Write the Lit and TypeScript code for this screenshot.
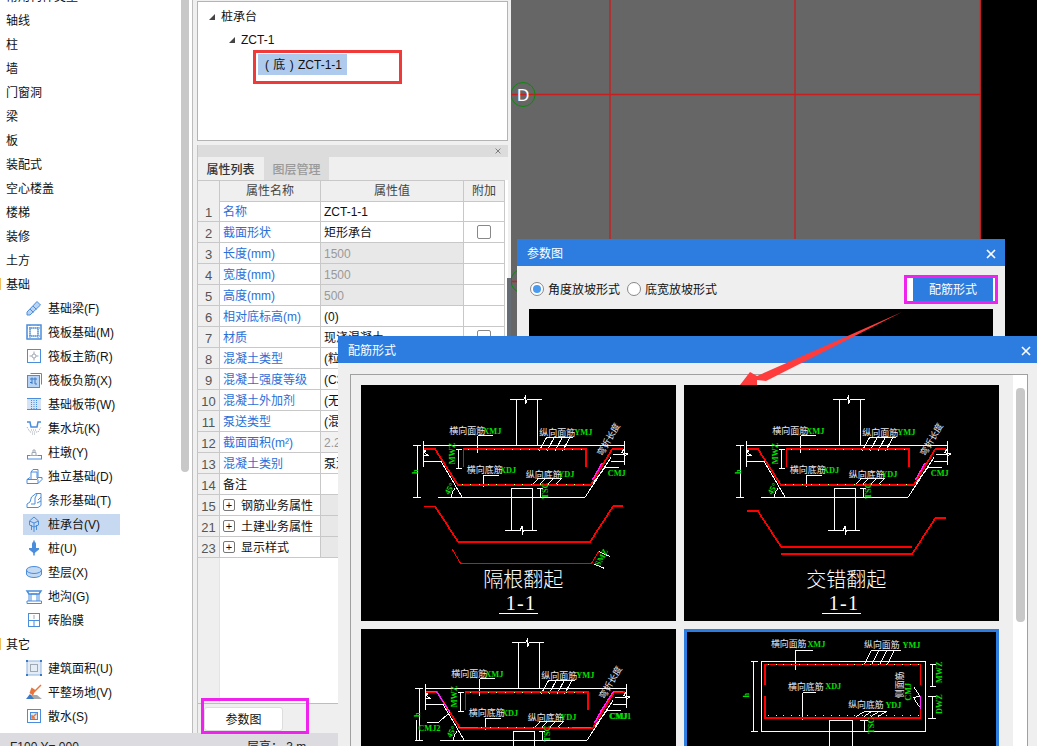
import { LitElement, html, css, svg } from "lit";
import { customElement } from "lit/decorators.js";

const pl = (pts: string, cls = "w") => svg`<polyline class=${cls} points=${pts}></polyline>`;
const lbl = (x: number, y: number, s: string, rot = 0) =>
  svg`<text class="lbl" x=${x} y=${y} transform=${rot ? `rotate(${rot} ${x} ${y})` : ""}>${s}</text>`;
const grn = (x: number, y: number, s: string, rot = 0) =>
  svg`<text class="grn" x=${x} y=${y} transform=${rot ? `rotate(${rot} ${x} ${y})` : ""}>${s}</text>`;
const dots = (x0: number, x1: number, y: number, step = 26) => {
  const out = [];
  for (let x = x0; x <= x1; x += step) out.push(svg`<rect class="dot" x=${x} y=${y} width="3" height="3"></rect>`);
  return out;
};
const hatch = (xs: number[], y0: number, y1: number, dx: number) => xs.map((x) => pl(`${x},${y0} ${x - dx},${y1}`));

const upper = (xmj: string, ydj: string) => svg`
  ${["465,58 507,58 512,46 512,71 517,58 562,58", "485,58 485,196", "547,58 547,196", "205,196 808,196", "205,183 205,260", "808,183 808,255",
    "186,196 186,352", "175,196 197,196", "175,352 197,352", "205,212 216,205 208,218 218,225 205,225", "808,205 800,218 818,222 808,228",
    "205,244 258,244 322,352", "250,352 690,352 768,232", "775,222 808,222", "768,244 808,244",
    "310,207 310,265", "302,207 320,207", "302,265 320,265",
    "368,167 413,167", "368,167 368,218", "575,172 655,172", "385,285 432,285", "385,285 385,320", "550,295 620,295",
    "470,325 533,325", "470,325 470,451", "533,325 533,451", "450,451 496,451 501,438 501,464 506,451 546,451",
    "555,325 555,352", "546,325 564,325", "750,262 792,262", "750,262 722,300", "742,272 712,312"].map((p) => pl(p))}
  ${hatch([575, 598, 622, 645], 172, 212, 22)}
  ${hatch([550, 572, 596, 620], 295, 316, 20)}
  <path class="w" d="M290,352 A34,34 0 0 1 300,326"></path>
  ${pl("207,207 240,207 308,314 708,314 772,207 805,207", "r")}
  ${pl("325,262 325,207 693,207 693,262", "r")}
  ${dots(340, 690, 206)}
  ${dots(320, 700, 311)}
  ${pl("742,248 712,300", "m")}
  ${lbl(283, 163, "横向面筋")}${grn(385, 162, xmj)}
  ${lbl(553, 167, "纵向面筋")}${grn(658, 165, "YMJ")}
  ${lbl(335, 280, "横向底筋")}${grn(435, 279, "XDJ")}
  ${lbl(512, 293, "纵向底筋")}${grn(610, 291, ydj)}
  ${grn(300, 253, "MWZ", -90)}${grn(190, 282, "h", -90)}${grn(578, 356, "TSC", -90)}
  ${grn(282, 346, "45°", -60)}${grn(758, 288, "CMJ")}
  ${lbl(742, 230, "弯折长度", -60)}
`;

const title = (s: string, x: number) => svg`
  <text class="ttl" x=${x} y="622">${s}</text>
  <text class="num" x="452" y="690">1-1</text>
  ${pl("432,700 548,700")}
`;

const thumbs = [
  svg`<svg class="draw" viewBox="18 15 945 708">
    ${upper("XMJ", "YDJ")}
    ${pl("207,379 240,379 310,486 705,486 775,378 805,378", "r")}
    ${pl("292,508 316,549 710,549 732,513", "r2")}
    ${pl("732,515 766,530")}${pl("716,552 748,565")}
    ${grn(733, 560, "SMZ", -60)}
    ${title("隔根翻起", 385)}
  </svg>`,
  svg`<svg class="draw" viewBox="12 15 945 708">
    <g transform="translate(-6 0)">${upper("XMJ", "YDJ")}</g>
    ${pl("202,392 233,392 303,500 695,500", "r")}
    ${pl("303,521 697,521 767,413 797,413", "r")}
    <g transform="translate(-6 0)">${title("交错翻起", 385)}</g>
  </svg>`,
  svg`<svg class="draw" viewBox="18 12 945 708">
    <g transform="translate(6 -6)">${upper("XMJ", "YDJ")}</g>
    ${pl("213,200 245,200 285,262", "m")}
    ${pl("310,307 368,307", "m")}${pl("650,307 708,307", "m")}
    ${pl("775,200 803,200", "m")}${pl("775,200 735,262", "m")}
    ${pl("217,292 250,292 285,262")}${pl("185,285 185,345")}
    ${grn(190, 318, "CMJ2")}${grn(762, 281, "CMJ1")}
  </svg>`,
  svg`<svg class="draw" viewBox="21 21 927 699">
    ${["241,112 740,112 740,322 241,322 241,112", "217,112 217,322", "208,112 230,112", "208,322 230,322",
      "345,76 398,76", "345,76 345,135", "575,78 665,78", "367,205 407,205", "367,205 367,288", "555,262 622,262",
      "762,120 762,188", "752,120 772,120", "752,188 772,188", "760,216 760,284", "748,216 772,216", "748,284 772,284",
      "703,187 723,216 703,220 722,250", "555,290 555,325", "541,290 564,290", "448,290 518,290", "448,290 448,740", "518,290 518,740"].map((p) => pl(p))}
    ${hatch([575, 598, 622, 645], 78, 122, 22)}
    ${hatch([555, 578, 600, 622], 262, 278, 26)}
    ${pl("252,183 252,120 725,120 725,183", "r")}
    ${pl("252,216 252,282 725,282 725,216", "r")}
    ${pl("725,216 725,255", "m")}
    ${dots(260, 720, 119, 24)}${dots(260, 720, 272, 24)}
    ${lbl(270, 67, "横向面筋")}${grn(381, 66, "XMJ")}
    ${lbl(553, 70, "纵向面筋")}${grn(670, 69, "YMJ")}
    ${lbl(322, 196, "横向底筋")}${grn(435, 195, "XDJ")}
    ${lbl(505, 253, "纵向底筋")}${grn(618, 252, "YDJ")}
    ${grn(790, 176, "MWZ", -90)}${grn(790, 270, "DWZ", -90)}
    ${grn(203, 220, "h", -90)}${grn(582, 330, "TSC", -90)}${grn(696, 230, "CMJ", -90)}
    ${lbl(670, 222, "侧面筋", -90)}
  </svg>`,
];

const icons: Record<string, unknown> = {
  beam: svg`<path class="il" d="M1 12 L11 1.5 L14.5 5 L4 15 L1 15 Z"></path><path class="ib1" d="M4 9 L7.5 12.5 M7 6 L10.5 9.5"></path>`,
  raft: svg`<rect class="ib2" x="1" y="1" width="14" height="14"></rect><rect class="ib1" x="4" y="4" width="8" height="8"></rect><path class="ib1" stroke-dasharray="1 1" d="M1 4 H15 M1 12 H15 M4 1 V15 M12 1 V15"></path>`,
  main: svg`<rect class="ib1" x="1.5" y="1.5" width="13" height="13"></rect><path class="ig" d="M3.5 8 H6 M10 8 H12.5 M8 3.5 V6 M8 10 V12.5"></path><circle class="ig" cx="8" cy="8" r="2"></circle>`,
  neg: svg`<path class="ib1" d="M4.5 1.5 H15.5 V12.5"></path><rect class="il" x="1.5" y="3.5" width="12" height="12"></rect><path class="ibd" d="M4 7 H11 M6 5.5 V12 M9 5.5 V12 M4 10.5 H6 M9 12 L11 12"></path>`,
  strip: svg`<rect class="lf" x="1" y="2" width="14" height="12"></rect><path class="ib1" stroke-dasharray="1 1" d="M5.5 2 V14 M10.5 2 V14 M8 2 V14"></path><path class="ib1" d="M1 2.5 H15 M1 13.5 H15"></path>`,
  pit: svg`<path class="ib2" d="M1 2 H4 L5 7 H11 L12 2 H15"></path><path class="ig" stroke-dasharray="1 1" d="M1 7 L4 12 H12 L15 7 M5 10 H11 M6 14 H10"></path>`,
  pier: svg`<rect class="ib1" x="1.5" y="11.5" width="14" height="3.5"></rect><path class="ig" d="M4 11.5 H12 M6 11 V8.5 H10 V11 M7 8 V6 H9 V8"></path>`,
  iso: svg`<path class="ib1" d="M1 15.5 V11.5 H5 V4 L7 1.5 H12 V10 M5 4 H11 V10 M1 11.5 L4 9.5 M1 15.5 H12 L16 11.5 V9.5 H12 L11 11.5 H1 M12 15.5 V11.5"></path>`,
  bar: svg`<path class="ib1" d="M1 15.5 V12 L4 10 L5.5 5 L10 1.5 H15 V13.5 L12 15.5 Z M5 12 H9 L9 6 L11 2 M12 8 L15 5 M11 11 L15 9"></path>`,
  cap: svg`<path class="ib1" d="M8 1 L12.5 5 L12.5 9 L8 11 L3.5 9 V5 Z M3.5 5 L8 7 L12.5 5 M8 7 V16 M5.5 9 V14 M10.5 9 V14"></path>`,
  pile: svg`<path class="ib" d="M8 0.5 V15.5" stroke-width="1.5"></path><rect class="lfb" x="6" y="2" width="4" height="7" rx="1.5"></rect><path class="lfs" d="M3 8 H13 V9.5 L8 13.5 L3 9.5 Z"></path>`,
  pad: svg`<path class="lf2" d="M0.5 6 A7.5 3.5 0 0 1 15.5 6 V10 A7.5 3.5 0 0 1 0.5 10 Z"></path><path class="ib1" d="M0.5 6 A7.5 3.5 0 0 0 15.5 6"></path>`,
  ditch: svg`<path class="ib1" d="M1 15.5 H15.5 V13 H1 Z M3 13 V6 M13 13 V6 M5 13 V6 M11 13 V6 M5 6 H11"></path><path class="ib2" d="M1 3 H15 L13 6 H3 Z"></path>`,
  brick: svg`<rect class="ib1" x="2.5" y="1.5" width="11" height="13"></rect><path class="ib1" d="M2.5 8.5 H13.5 M8 8.5 V14.5"></path><path class="ig" d="M8 3 V7"></path>`,
  area: svg`<rect class="lfbl" x="1" y="1" width="14" height="14"></rect><rect class="ig" x="4.5" y="4.5" width="7" height="7"></rect><path class="cor" d="M0 0 H2 V2 H0 Z M14 0 H16 V2 H14 Z M0 14 H2 V16 H0 Z M14 14 H16 V16 H14 Z"></path>`,
  level: svg`<path class="orl" d="M15 1 L8 8"></path><path class="orf" d="M9.5 6 L5.5 3.5 L3.5 9 L7 11.5 Z"></path><path class="gr" d="M5 11 L11 11 L16 15 L4 15 Z"></path><path class="bl" d="M0 15 L4 10 L8 15 Z"></path>`,
  water: svg`<rect class="ib1" x="1.5" y="1.5" width="13" height="13"></rect><rect class="lfs2" x="4.5" y="4.5" width="7" height="7"></rect><path class="orl" d="M10.5 5.5 L6 10 M6 7 V10 H9"></path>`,
};

const sideItems: Array<{ t: string; k?: "g" | "m"; i?: string; sel?: boolean }> = [
  { t: "常用构件类型" }, { t: "轴线" }, { t: "柱" }, { t: "墙" }, { t: "门窗洞" }, { t: "梁" }, { t: "板" }, { t: "装配式" },
  { t: "空心楼盖" }, { t: "楼梯" }, { t: "装修" }, { t: "土方" }, { t: "基础", k: "m" },
  { t: "基础梁(F)", k: "g", i: "beam" }, { t: "筏板基础(M)", k: "g", i: "raft" }, { t: "筏板主筋(R)", k: "g", i: "main" },
  { t: "筏板负筋(X)", k: "g", i: "neg" }, { t: "基础板带(W)", k: "g", i: "strip" }, { t: "集水坑(K)", k: "g", i: "pit" },
  { t: "柱墩(Y)", k: "g", i: "pier" }, { t: "独立基础(D)", k: "g", i: "iso" }, { t: "条形基础(T)", k: "g", i: "bar" },
  { t: "桩承台(V)", k: "g", i: "cap", sel: true }, { t: "桩(U)", k: "g", i: "pile" }, { t: "垫层(X)", k: "g", i: "pad" },
  { t: "地沟(G)", k: "g", i: "ditch" }, { t: "砖胎膜", k: "g", i: "brick" }, { t: "其它", k: "m" },
  { t: "建筑面积(U)", k: "g", i: "area" }, { t: "平整场地(V)", k: "g", i: "level" }, { t: "散水(S)", k: "g", i: "water" },
];

const rows: Array<{ n: string; name: string; val?: string; v?: "dis" | "mut"; cb?: boolean; plain?: boolean; exp?: boolean }> = [
  { n: "1", name: "名称", val: "ZCT-1-1" },
  { n: "2", name: "截面形状", val: "矩形承台", cb: true },
  { n: "3", name: "长度(mm)", val: "1500", v: "dis" },
  { n: "4", name: "宽度(mm)", val: "1500", v: "dis" },
  { n: "5", name: "高度(mm)", val: "500", v: "dis" },
  { n: "6", name: "相对底标高(m)", val: "(0)" },
  { n: "7", name: "材质", val: "现浇混凝土", cb: true },
  { n: "8", name: "混凝土类型", val: "(粒径31.5砼32.5级)" },
  { n: "9", name: "混凝土强度等级", val: "(C30)" },
  { n: "10", name: "混凝土外加剂", val: "(无)" },
  { n: "11", name: "泵送类型", val: "(混凝土泵)" },
  { n: "12", name: "截面面积(m²)", val: "2.25", v: "mut" },
  { n: "13", name: "混凝土类别", val: "泵送砼" },
  { n: "14", name: "备注", val: "", plain: true },
  { n: "15", name: "钢筋业务属性", exp: true },
  { n: "21", name: "土建业务属性", exp: true },
  { n: "23", name: "显示样式", exp: true },
];

const closeX = html`<svg class="x" viewBox="0 0 10 10"><path d="M1 1 L9 9 M9 1 L1 9"></path></svg>`;

@customElement("app-root")
export class AppRoot extends LitElement {
  static styles = css`
    :host { display: block; position: relative; width: 1037px; height: 746px; overflow: hidden; background: #f0f0f0;
      font: 12px/1 "Liberation Sans", "Noto Sans CJK SC", sans-serif; color: #111; }
    .main { display: flex; height: 733px; }
    .side { width: 192px; height: 733px; box-sizing: content-box; background: #fff; border-right: 1px solid #bdbdbd; display: flex; overflow: hidden; flex: none; }
    .list { flex: 1; margin-top: -16px; }
    .list span { padding-top: 1px; }
    .sb { width: 8px; height: 472px; margin: 0 3px 0 0; background: #c8c8c8; border-radius: 0 0 4px 4px; flex: none; }
    .it { height: 24px; display: flex; align-items: center; padding-left: 6px; }
    .it.m { padding-left: 0; }
    .mark { width: 1px; height: 12px; background: #f0c060; margin-right: 5px; }
    .it.g { padding-left: 23px; }
    .pill { display: flex; align-items: center; gap: 6px; width: 94px; height: 21px; padding-left: 3px; flex: none; }
    .pill.sel { background: #c6d9f0; }
    .ic { width: 16px; height: 16px; flex: none; overflow: visible; }
    .ib, .ib1, .ib2, .ibd, .ig, .orl { fill: none; }
    .ib, .ib1, .ib2 { stroke: #4a8ddc; }
    .ib1 { stroke-width: 1; }
    .ib2 { stroke-width: 1.5; }
    .ibd { stroke: #3a78c8; }
    .ig { stroke: #a0a8b4; }
    .il { fill: #b9d3f2; stroke: #4a8ddc; }
    .lf { fill: #d4e3f6; }
    .lfb { fill: #4a8ddc; }
    .lfs { fill: #4a8ddc; }
    .lf2 { fill: #c4d9f2; stroke: #4a8ddc; }
    .lfbl { fill: #e4ecf6; stroke: #8fb4e4; }
    .lfs2 { fill: #dbe8f8; stroke: #4a8ddc; }
    .cor { fill: #3a78c8; }
    .orl { stroke: #e8743b; stroke-width: 1.4; }
    .orf { fill: #e8743b; }
    .gr { fill: #a8a8a8; }
    .bl { fill: #3a78c8; }

    .col { width: 311px; margin-left: 4px; flex: none; display: flex; flex-direction: column; gap: 4px; padding-top: 1px; box-sizing: border-box; height: 733px; }
    .tree { position: relative; height: 140px; box-sizing: border-box; background: #fff; border: 1px solid #b4b4b4; flex: none; padding-top: 3px; }
    .node { height: 24px; display: flex; align-items: center; gap: 6px; }
    .tri { width: 0; height: 0; border-style: solid; border-width: 0 0 6px 6px; border-color: transparent transparent #444 transparent; }
    .n1 { padding-left: 11px; }
    .n2 { padding-left: 31px; margin-top: -1px; }
    .n3 { margin-left: 60px; margin-top: 2px; width: 89px; height: 21px; background: #aecbee; padding: 1px 0 0 7px; box-sizing: border-box; white-space: pre; word-spacing: 1px; }
    .redbox { position: absolute; left: 55px; top: 48px; width: 149px; height: 34px; box-sizing: border-box; border: 3px solid #f03a3a; }

    .props { flex: 1; display: flex; flex-direction: column; border-left: 1px solid #c4c4c4; background: #fff; position: relative; min-height: 0; }
    .strip { height: 12px; background: #dcdcdc; display: flex; justify-content: flex-end; align-items: center; padding-right: 7px; flex: none; }
    .strip .x { width: 6px; height: 6px; }
    .strip .x path { stroke: #777; stroke-width: 1.6; }
    .tabs { height: 23px; display: flex; background: #efefef; flex: none; }
    .tab { width: 65px; display: flex; align-items: center; justify-content: center; font-weight: 500; color: #333; padding-top: 2px; box-sizing: border-box; }
    .tab.off { background: #dcdcdc; color: #999; margin-left: 1px; }
    .hdr, .row { display: grid; grid-template-columns: 22px 101px 143px 41px; width: 307px; }
    .hdr { height: 21px; flex: none; }
    .hdr > div { background: #efefef; border: solid #c8c8c8; border-width: 1px 1px 1px 0; display: flex; align-items: center; justify-content: center; color: #444; box-sizing: border-box; margin-bottom: -1px; }
    .row { height: 21px; flex: none; }
    .row > div { border: solid #c8c8c8; border-width: 0 1px 1px 0; display: flex; align-items: center; box-sizing: border-box; padding: 2px 0 0 3px; overflow: hidden; white-space: nowrap; }
    .row > .no { background: #efefef; justify-content: center; padding: 2px 0 0; color: #555; font-size: 13px; }
    .nm { color: #2a6fd8; }
    .nm.plain { color: #111; }
    .val.dis { background: #e8e8e8; color: #999; }
    .val.mut { background: #f2f2f2; color: #999; }
    .val.shade { background: #e8e8e8; }
    .row > .add { justify-content: center; padding: 0; }
    .cbx { width: 14px; height: 14px; box-sizing: border-box; border: 1px solid #888; border-radius: 2px; background: #fff; }
    .plus { width: 12px; height: 12px; box-sizing: border-box; border: 1px solid #777; border-radius: 2px; display: flex; align-items: center; justify-content: center; margin: -2px 6px 0 0; font-size: 11px; font-style: normal; flex: none; }
    .filler { flex: 1; min-height: 0; display: flex; }
    .filler .rail { width: 21px; background: #efefef; border-right: 1px solid #e4e4e4; }
    .foot { height: 30px; flex: none; background: #efefef; border-top: 1px solid #bdbdbd; padding: 3px 0 0 6px; box-sizing: border-box; position: relative; }
    .btn { width: 79px; height: 24px; background: #fff; border: 1px solid #ddd; border-radius: 3px; box-sizing: border-box; display: flex; align-items: center; justify-content: center; padding-top: 2px; }
    .magbox { position: absolute; left: 3px; top: -6px; width: 108px; height: 36px; box-sizing: border-box; border: 3px solid #f022ee; }

    .canvas { margin-left: 3px; flex: 1; background: #000; height: 733px; overflow: hidden; }
    .canvas svg { display: block; }
    .status { height: 13px; background: #dcdce0; overflow: hidden; display: flex; padding-top: 8px; box-sizing: border-box; color: #222; }
    .status span:first-child { width: 247px; padding-left: 10px; box-sizing: border-box; }

    .handle { position: absolute; left: 507px; top: 278px; width: 4px; height: 58px; background: #666c74; }
    .dlg { position: absolute; background: #efefef; }
    .dh { height: 27px; background: #2d7de0; color: #fff; display: flex; align-items: center; justify-content: space-between; padding: 2px 9px 0 10px; box-sizing: border-box; }
    .x { width: 10px; height: 10px; }
    .x path { stroke: #fff; stroke-width: 1.6; fill: none; }
    .d1 { left: 517px; top: 239px; width: 488px; height: 100px; }
    .d1 .bar { height: 43px; display: flex; align-items: center; padding: 3px 7px 0 13px; box-sizing: border-box; }
    .d1 .radio { width: 14px; height: 14px; border-radius: 50%; box-sizing: border-box; border: 1px solid #888; background: #fff; display: flex; align-items: center; justify-content: center; flex: none; }
    .d1 .radio.on::after { content: ""; width: 8px; height: 8px; border-radius: 50%; background: #4a9bf0; }
    .d1 .rt { margin-left: 4px; margin-right: 7px; padding-top: 2px; }
    .d1 .cfgwrap { margin-left: auto; width: 94px; height: 29px; box-sizing: border-box; border: 3px solid #f022ee; background: #fff; padding: 0 2px 0 6px; }
    .cfg { height: 100%; background: #2d7de0; color: #fff; display: flex; align-items: center; justify-content: center; padding-top: 2px; box-sizing: border-box; }
    .black { background: #000; height: 30px; margin: 0 12px; }

    .d2 { left: 338px; top: 336px; width: 699px; height: 410px; }
    .d2 .dh { padding-right: 6px; }
    .inner { position: absolute; left: 12px; top: 38px; width: 678px; height: 400px; box-sizing: border-box; border: 1px solid #a0a0a0; display: flex; }
    .grid { display: grid; grid-template-columns: 315px 315px; grid-auto-rows: 236px; gap: 8px; padding: 10px 0 0 10px; width: 662px; box-sizing: border-box; }
    .thumb { background: #000; box-sizing: border-box; }
    .thumb.sel { border: 3px solid #2d7de0; }
    .track { width: 14px; background: #fff; flex: none; padding: 13px 2px 0 3px; box-sizing: border-box; }
    .thumbbar { height: 234px; background: #c8c8c8; border-radius: 4px; }
    .draw { width: 100%; height: 100%; display: block; shape-rendering: crispEdges; }
    .draw polyline, .draw path { fill: none; }
    .w { stroke: #fff; stroke-width: 3; }
    .r { stroke: #ff0000; stroke-width: 5; }
    .r2 { stroke: #ff0000; stroke-width: 3; }
    .m { stroke: #ff20ff; stroke-width: 4; }
    .dot { fill: #ffff80; }
    .lbl { fill: #e8e8f0; font-size: 27px; font-family: "Noto Sans CJK SC", sans-serif; }
    .grn { fill: #00e000; font-size: 25px; font-family: "Liberation Serif", serif; font-weight: 700; }
    .ttl { fill: #fff; font-size: 60px; font-family: "Noto Sans CJK SC", sans-serif; font-weight: 300; }
    .num { fill: #fff; font-size: 60px; letter-spacing: 4px; font-family: "Liberation Serif", serif; }
    .arrow { position: absolute; left: 0; top: 0; pointer-events: none; }
    .arrow polygon { fill: #ff3b3b; }
  `;

  render() {
    return html`
      <div class="main">
        <aside class="side">
          <div class="list">
            ${sideItems.map((s) =>
              s.k === "g"
                ? html`<div class="it g"><div class="pill ${s.sel ? "sel" : ""}"><svg class="ic" viewBox="0 0 16 16">${icons[s.i!]}</svg><span>${s.t}</span></div></div>`
                : s.k === "m"
                ? html`<div class="it m"><i class="mark"></i><span>${s.t}</span></div>`
                : html`<div class="it"><span>${s.t}</span></div>`
            )}
          </div>
          <div class="sb"></div>
        </aside>
        <div class="col">
          <div class="tree">
            <div class="node n1"><i class="tri"></i><span>桩承台</span></div>
            <div class="node n2"><i class="tri"></i><span>ZCT-1</span></div>
            <div class="node n3"><span>( 底 ) ZCT-1-1</span></div>
            <div class="redbox"></div>
          </div>
          <section class="props">
            <div class="strip">${closeX}</div>
            <div class="tabs"><div class="tab">属性列表</div><div class="tab off">图层管理</div></div>
            <div class="hdr"><div></div><div>属性名称</div><div>属性值</div><div>附加</div></div>
            ${rows.map((r) => html`
              <div class="row">
                <div class="no">${r.n}</div>
                ${r.exp
                  ? html`<div class="nm plain"><i class="plus">+</i>${r.name}</div><div class="val shade"></div><div class="add val shade"></div>`
                  : html`<div class="nm ${r.plain ? "plain" : ""}">${r.name}</div>
                      <div class="val ${r.v ?? ""}">${r.val}</div>
                      <div class="add">${r.cb ? html`<i class="cbx"></i>` : ""}</div>`}
              </div>`)}
            <div class="filler"><div class="rail"></div></div>
            <div class="foot"><div class="btn">参数图</div><div class="magbox"></div></div>
          </section>
        </div>
        <div class="canvas">
          <svg width="470" height="733" viewBox="511 0 470 733">
            <rect x="511" y="0" width="470" height="733" fill="#666"></rect>
            <path d="M610 0 V733 M795 0 V733 M980.5 0 V733 M511 94.5 H981 M511 281.5 H981" stroke="#c81e1e" stroke-width="1.4" fill="none"></path>
            <circle cx="523" cy="94.5" r="12" fill="none" stroke="#0a8a0a"></circle>
            <circle cx="523" cy="281" r="12" fill="none" stroke="#0a8a0a"></circle>
            <text x="517" y="101" fill="#fff" font-size="17" font-family="Liberation Sans, sans-serif">D</text>
          </svg>
        </div>
      </div>
      <div class="status"><span>F100 Y= 000</span><span>层高： 3 m</span></div>

      <div class="handle"></div>

      <div class="dlg d1">
        <div class="dh"><span>参数图</span>${closeX}</div>
        <div class="bar">
          <i class="radio on"></i><span class="rt">角度放坡形式</span>
          <i class="radio"></i><span class="rt">底宽放坡形式</span>
          <div class="cfgwrap"><div class="cfg">配筋形式</div></div>
        </div>
        <div class="black"></div>
      </div>

      <div class="dlg d2">
        <div class="dh"><span>配筋形式</span>${closeX}</div>
        <div class="inner">
          <div class="grid">
            ${thumbs.map((t, i) => html`<div class="thumb ${i === 3 ? "sel" : ""}">${t}</div>`)}
          </div>
          <div class="track"><div class="thumbbar"></div></div>
        </div>
      </div>

      <svg class="arrow" width="1037" height="746" viewBox="0 0 1037 746">
        <polygon points="740,385 750,372 757,376 902,312 766,381 757,380 757,385"></polygon>
      </svg>
    `;
  }
}
